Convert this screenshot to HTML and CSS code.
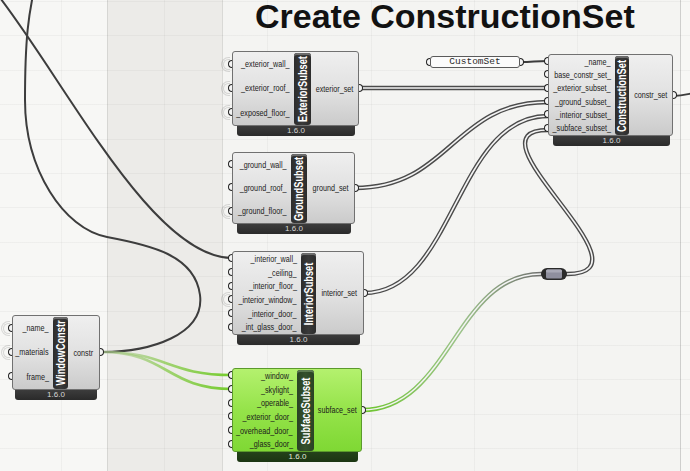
FILE: index.html
```html
<!DOCTYPE html>
<html>
<head>
<meta charset="utf-8">
<link rel="stylesheet" href="styles.css">
</head>
<body>
<div class="canvas">
  <div class="zone z-left"></div>
  <div class="zone z-grey"></div>
  <div class="zone z-main"><h1 class="title">Create ConstructionSet</h1></div>
  <div class="zone z-right"></div>

  <svg class="wires" width="690" height="471" viewBox="0 0 690 471">
    <defs>
      <linearGradient id="gw" x1="102" y1="0" x2="232" y2="0" gradientUnits="userSpaceOnUse">
        <stop offset="0" stop-color="#a8c48e" stop-opacity="0.45"/>
        <stop offset="0.5" stop-color="#8ccc52" stop-opacity="0.8"/>
        <stop offset="1" stop-color="#74cc2c"/>
      </linearGradient>
      <linearGradient id="gs" x1="362" y1="0" x2="541" y2="0" gradientUnits="userSpaceOnUse">
        <stop offset="0" stop-color="#6cc52c"/>
        <stop offset="0.55" stop-color="#9cc38a"/>
        <stop offset="1" stop-color="#707070"/>
      </linearGradient>
      <path id="d-ext" d="M359,88 L548,88"/>
      <path id="d-gnd" d="M355,188 C450,188 453,102 548,102"/>
      <path id="d-int" d="M364,293 C455,293 455,116 548,116"/>
      <path id="d-sub" d="M362,410 C450,410 455,274 541,274"/>
      <path id="d-rel" d="M567,274 C660,274 460,130 548,130"/>
    </defs>
    <g fill="none" stroke-linecap="round">
      <path class="w" d="M-10,-15 C60,70 150,258 232,258"/>
      <path class="w" d="M102,352 C150,352 205,335 200,295 C195,255 150,245 107,237 C64,229 25,170 25,100 C25,30 30,10 34,-10"/>
      <path class="w" d="M520,62 C534,62 534,61 548,61"/>
      <path class="w" d="M673,96 C685,96 690,93 700,92"/>
      <path class="wg" d="M102,352 C167,352 167,375 232,375"/>
      <path class="wg" d="M102,352 C167,352 167,389 232,389"/>
      <use href="#d-ext" class="dbo"/><use href="#d-ext" class="dbi"/>
      <use href="#d-gnd" class="dbo"/><use href="#d-gnd" class="dbi"/>
      <use href="#d-int" class="dbo"/><use href="#d-int" class="dbi"/>
      <use href="#d-rel" class="dbo"/><use href="#d-rel" class="dbi"/>
      <use href="#d-sub" class="dbg"/><use href="#d-sub" class="dbi"/>
    </g>
    <g class="relay">
      <rect x="541" y="268" width="26" height="12" rx="6" fill="#2a2a2a"/>
      <rect x="546" y="269.5" width="16" height="9" rx="1.5" fill="#8f8f9e"/>
      <rect x="546" y="269.5" width="16" height="3" rx="1.5" fill="#a9a9b6"/>
    </g>
  </svg>

  <div class="panel">CustomSet</div>

  <div class="comp c-ext">
    <div class="body">
      <div class="ins">
        <div class="p r"><span>_exterior_wall_</span></div>
        <div class="p r"><span>_exterior_roof_</span></div>
        <div class="p r"><span>_exposed_floor_</span></div>
      </div>
      <div class="bar"><span>ExteriorSubset</span></div>
      <div class="outs"><div class="p"><span>exterior_set</span></div></div>
    </div>
    <div class="ver">1.6.0</div>
  </div>

  <div class="comp c-gnd">
    <div class="body">
      <div class="ins">
        <div class="p"><span>_ground_wall_</span></div>
        <div class="p"><span>_ground_roof_</span></div>
        <div class="p r"><span>_ground_floor_</span></div>
      </div>
      <div class="bar"><span>GroundSubset</span></div>
      <div class="outs"><div class="p"><span>ground_set</span></div></div>
    </div>
    <div class="ver">1.6.0</div>
  </div>

  <div class="comp c-int">
    <div class="body">
      <div class="ins">
        <div class="p"><span>_interior_wall_</span></div>
        <div class="p"><span>_ceiling_</span></div>
        <div class="p"><span>_interior_floor_</span></div>
        <div class="p r"><span>_interior_window_</span></div>
        <div class="p"><span>_interior_door_</span></div>
        <div class="p"><span>_int_glass_door_</span></div>
      </div>
      <div class="bar"><span>InteriorSubset</span></div>
      <div class="outs"><div class="p"><span>interior_set</span></div></div>
    </div>
    <div class="ver">1.6.0</div>
  </div>

  <div class="comp c-sub green">
    <div class="body">
      <div class="ins">
        <div class="p"><span>_window_</span></div>
        <div class="p"><span>_skylight_</span></div>
        <div class="p"><span>_operable_</span></div>
        <div class="p"><span>_exterior_door_</span></div>
        <div class="p"><span>_overhead_door_</span></div>
        <div class="p"><span>_glass_door_</span></div>
      </div>
      <div class="bar"><span>SubfaceSubset</span></div>
      <div class="outs"><div class="p"><span>subface_set</span></div></div>
    </div>
    <div class="ver">1.6.0</div>
  </div>

  <div class="comp c-win">
    <div class="body">
      <div class="ins">
        <div class="p r"><span>_name_</span></div>
        <div class="p r"><span>_materials</span></div>
        <div class="p"><span>frame_</span></div>
      </div>
      <div class="bar"><span>WindowConstr</span></div>
      <div class="outs"><div class="p"><span>constr</span></div></div>
    </div>
    <div class="ver">1.6.0</div>
  </div>

  <div class="comp c-set">
    <div class="body">
      <div class="ins">
        <div class="p"><span>_name_</span></div>
        <div class="p"><span>base_constr_set_</span></div>
        <div class="p"><span>_exterior_subset_</span></div>
        <div class="p"><span>_ground_subset_</span></div>
        <div class="p"><span>_interior_subset_</span></div>
        <div class="p"><span>_subface_subset_</span></div>
      </div>
      <div class="bar"><span>ConstructionSet</span></div>
      <div class="outs"><div class="p"><span>constr_set</span></div></div>
    </div>
    <div class="ver">1.6.0</div>
  </div>
</div>
</body>
</html>
```

FILE: styles.css
```css
html, body {
  margin: 0;
  padding: 0;
  background: #f7f7f5;
}

.canvas {
  position: relative;
  width: 690px;
  height: 471px;
  overflow: hidden;
  display: grid;
  grid-template-columns: 107px 116px 458px 1fr;
  background: #f7f7f5;
  font-family: "Liberation Sans", Arial, sans-serif;
}

.canvas::before {
  content: "";
  position: absolute;
  inset: 0;
  background-image:
    repeating-linear-gradient(to bottom, transparent 0, transparent 1px, rgba(0,0,0,0.035) 1px, rgba(0,0,0,0.035) 2px, transparent 2px, transparent 34.4px),
    repeating-linear-gradient(to right, transparent 0, transparent 61px, rgba(0,0,0,0.035) 61px, rgba(0,0,0,0.035) 62px, transparent 62px, transparent 103.2px);
  pointer-events: none;
}

.zone { height: 471px; box-sizing: border-box; }
.z-left { background: #f7f7f5; }
.z-grey { background: #ecebe8; border-left: 1px solid #d6d6d3; border-right: 1px solid #d9d9d6; }
.z-main { background: #f4f4f2; border-right: 1px solid #d6d6d4; }
.z-right { background: #f7f7f5; }

.title {
  margin: 0;
  padding: 1px 0 0 32px;
  font: bold 34px/30px "Liberation Sans", Arial, sans-serif;
  color: #121212;
  white-space: nowrap;
}

.wires {
  position: absolute;
  left: 0;
  top: 0;
}

.w { stroke: #3d3d3d; stroke-width: 2; }
.wg { stroke: url(#gw); stroke-width: 2.6; }
.dbo { stroke: #4b4b4b; stroke-width: 4.4; }
.dbg { stroke: url(#gs); stroke-width: 4.4; }
.dbi { stroke: #f3f3f3; stroke-width: 1.6; }

/* panel */
.panel {
  position: absolute;
  left: 430px;
  top: 56px;
  width: 90px;
  height: 12px;
  box-sizing: border-box;
  border: 1px solid #5a5a5a;
  border-radius: 3px;
  background: #fbfbfb;
  font: 9.5px/10px "Liberation Mono", "Courier New", monospace;
  color: #2a2a2a;
  text-align: center;
}
.panel::before,
.panel::after {
  content: "";
  position: absolute;
  top: 1px;
  width: 3px;
  height: 6px;
  border: 1.5px solid #222;
  background: #f4f4f4;
}
.panel::before { left: -5px; border-right: 0; border-radius: 5px 0 0 5px; }
.panel::after { right: -5px; border-left: 0; border-radius: 0 5px 5px 0; }

/* components */
.comp {
  position: absolute;
  font-size: 9px;
  color: #1b1b1b;
}

.body {
  box-sizing: border-box;
  height: var(--h);
  display: grid;
  grid-template-columns: var(--ci) var(--cb) minmax(0, 1fr);
  border: 1px solid #717171;
  border-radius: 3px;
  background: linear-gradient(#efefef, #e0e0e0 55%, #cbcbcb);
}

.ins, .outs {
  display: flex;
  flex-direction: column;
  min-width: 0;
}

.p {
  flex: 1;
  display: flex;
  align-items: center;
  position: relative;
  white-space: nowrap;
  min-width: 0;
}

.p span {
  display: inline-block;
  flex: none;
  transform: scaleX(0.8);
}

.ins .p {
  justify-content: flex-end;
  padding-right: 4px;
}
.ins .p span { transform-origin: right center; }

.outs .p {
  justify-content: center;
}
.outs .p span { transform-origin: center center; }

.ins .p::before {
  content: "";
  position: absolute;
  left: -5px;
  top: 50%;
  margin-top: -4.5px;
  width: 3px;
  height: 6px;
  border: 1.5px solid #222;
  border-right: 0;
  border-radius: 5px 0 0 5px;
  background: #f4f4f4;
}

.ins .p.r::after {
  content: "";
  position: absolute;
  left: -12px;
  top: 50%;
  margin-top: -7.5px;
  width: 6px;
  height: 9px;
  border: 3px double rgba(0, 0, 0, 0.13);
  border-right: 0;
  border-radius: 10px 0 0 10px;
}

.outs .p::after {
  content: "";
  position: absolute;
  right: -5px;
  top: 50%;
  margin-top: -4.5px;
  width: 3px;
  height: 6px;
  border: 1.5px solid #222;
  border-left: 0;
  border-radius: 0 5px 5px 0;
  background: #f4f4f4;
}

.bar {
  position: relative;
  margin-top: 1px;
  background: linear-gradient(to right, #2c2c2c, #3a3a3a 50%, #2c2c2c);
  border-radius: 3px;
  box-shadow: inset 0 2px 0 #6c6c6c;
}

.bar span {
  position: absolute;
  left: 50%;
  top: 50%;
  transform: translate(-50%, -50%) rotate(-90deg) scaleX(0.74);
  font: bold 12.5px/13px "Liberation Sans", Arial, sans-serif;
  color: #ffffff;
  white-space: nowrap;
}

.ver {
  margin: 0 4px 0 5px;
  height: 10px;
  background: linear-gradient(#3c3c3c, #2a2a2a);
  border-radius: 0 0 3px 3px;
  color: #d8d8d8;
  font: 8px/10px "Liberation Sans", Arial, sans-serif;
  text-align: center;
}

.green .body {
  background: linear-gradient(#b4f16e, #95e34a 50%, #7fd834);
  border-color: #5b9a2c;
}
.green .bar {
  background: linear-gradient(to right, #2a4324, #34502c 50%, #2a4324);
  box-shadow: inset 0 2px 0 #5d7a52;
}
.green .ver {
  background: linear-gradient(#24421a, #1b3512);
  color: #e0ecd8;
}

.c-ext { left: 232px; top: 51px; width: 127px; --h: 75px; --ci: 61px; --cb: 17px; }
.c-gnd { left: 232px; top: 152px; width: 123px; --h: 72px; --ci: 58px; --cb: 16px; }
.c-int { left: 232px; top: 251px; width: 132px; --h: 84px; --ci: 68px; --cb: 15px; }
.c-sub { left: 232px; top: 368px; width: 130px; --h: 84px; --ci: 64px; --cb: 17px; }
.c-win { left: 12px; top: 315px; width: 88px; --h: 75px; --ci: 40px; --cb: 15px; }
.c-win .ver { margin: 0 3px; }
.c-set { left: 548px; top: 54px; width: 125px; --h: 82px; --ci: 66px; --cb: 14px; }
.c-set .ver { margin: 0 3px 0 5px; }
```
